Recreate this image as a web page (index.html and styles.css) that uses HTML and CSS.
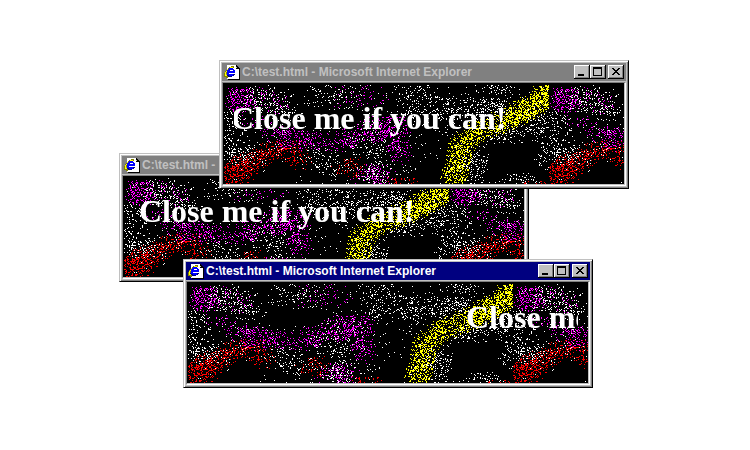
FILE: index.html
```html
<!DOCTYPE html>
<html lang="en">
<head>
<meta charset="utf-8">
<title>C:\test.html</title>
<link rel="stylesheet" href="styles.css">
</head>
<body>
<svg class="defs" aria-hidden="true">
  <symbol id="ie" viewBox="0 0 16 16">
    <path fill="#fff" d="M3 1h9v3h3v11H3z"/>
    <path fill="#000" d="M12 1h1v1h1v1h1v1h1v12H4v-1h11V5h-3z"/>
    <path fill="#c0c0c0" d="M12 3h1v1h-1z"/>
    <path fill="none" stroke="#808000" stroke-width="2" d="M10 3C7 2 1 8 1 11c0 2 2 2 4 1"/>
    <path fill="none" stroke="#ffff00" stroke-width="1" d="M9 3C6 3 1 8 1 10c0 1 1 2 2 1"/>
    <path fill="none" stroke="#000080" stroke-width="2" d="M10 10c-1 2-2 2-4 2-2 0-3-2-2-4"/>
    <path fill="none" stroke="#0000ff" stroke-width="2" d="M4 8h6c0-2-1-3-3-3S4 7 4 9s1 2 3 2h2"/>
  </symbol>
  <symbol id="min" viewBox="0 0 16 14"><path d="M4 9h6v2H4z"/></symbol>
  <symbol id="max" viewBox="0 0 16 14"><path fill-rule="evenodd" d="M3 2h9v9H3zM4 4h7v6H4z"/></symbol>
  <symbol id="close" viewBox="0 0 16 14"><path d="M4 3h2v1h1v1h2V4h1V3h2v1h-1v1h-1v1H9v1h1v1h1v1h1v1h-2V9H9V8H7v1H6v1H4V9h1V8h1V7h1V6H6V5H5V4H4z"/></symbol>
</svg>
<main class="desktop">
  <section class="window window-left">
    <header class="titlebar">
      <svg class="icon"><use href="#ie"/></svg>
      <span class="title">C:\test.html - Microsoft Internet Explorer</span>
      <button class="control" aria-label="Minimize"><svg><use href="#min"/></svg></button>
      <button class="control" aria-label="Maximize"><svg><use href="#max"/></svg></button>
      <button class="control control-close" aria-label="Close"><svg><use href="#close"/></svg></button>
    </header>
    <div class="view"><canvas width="400" height="100"></canvas><h1 class="marquee">Close me if you can!</h1></div>
  </section>
  <section class="window window-top">
    <header class="titlebar">
      <svg class="icon"><use href="#ie"/></svg>
      <span class="title">C:\test.html - Microsoft Internet Explorer</span>
      <button class="control" aria-label="Minimize"><svg><use href="#min"/></svg></button>
      <button class="control" aria-label="Maximize"><svg><use href="#max"/></svg></button>
      <button class="control control-close" aria-label="Close"><svg><use href="#close"/></svg></button>
    </header>
    <div class="view"><canvas width="400" height="100"></canvas><h1 class="marquee">Close me if you can!</h1></div>
  </section>
  <section class="window window-front">
    <header class="titlebar">
      <svg class="icon"><use href="#ie"/></svg>
      <span class="title">C:\test.html - Microsoft Internet Explorer</span>
      <button class="control" aria-label="Minimize"><svg><use href="#min"/></svg></button>
      <button class="control" aria-label="Maximize"><svg><use href="#max"/></svg></button>
      <button class="control control-close" aria-label="Close"><svg><use href="#close"/></svg></button>
    </header>
    <div class="view"><canvas width="400" height="100"></canvas><h1 class="marquee">Close me if you can!</h1></div>
  </section>
</main>
<script src="spray.js"></script>
</body>
</html>
```
FILE: styles.css
```css
body {
  margin: 0;
  background: #fff;
  font-family: "Liberation Sans", Arial, sans-serif;
}

.defs {
  display: none;
}

.desktop {
  position: relative;
  min-height: 100vh;
  overflow: hidden;
}

.window {
  position: absolute;
  box-sizing: border-box;
  width: 410px;
  padding: 1px;
  border: 1px solid;
  border-color: #c0c0c0 #000 #000 #c0c0c0;
  background: #c0c0c0;
  box-shadow: inset 1px 1px #fff, inset -1px -1px #808080;
}

.window-left { left: 119px; top: 153px; }
.window-top { left: 219px; top: 60px; }
.window-front { left: 183px; top: 259px; }

.titlebar {
  display: flex;
  align-items: center;
  height: 18px;
  margin: 1px 1px 0;
  padding: 0 2px;
  box-sizing: border-box;
  background: #808080;
  color: #c0c0c0;
}

.window-front .titlebar {
  background: #000080;
  color: #fff;
}

.icon {
  width: 16px;
  height: 16px;
  shape-rendering: crispEdges;
}

.title {
  flex: 1;
  margin-left: 2px;
  font-size: 12px;
  font-weight: bold;
  line-height: 18px;
  white-space: nowrap;
}

.control {
  width: 16px;
  height: 14px;
  padding: 0;
  border: 0;
  background: #c0c0c0;
  color: #000;
  box-shadow: inset -1px -1px #000, inset 1px 1px #fff, inset -2px -2px #808080;
}

.control svg {
  display: block;
  width: 16px;
  height: 14px;
  shape-rendering: crispEdges;
}

.control-close {
  margin-left: 2px;
}

.view {
  display: grid;
  grid-template-columns: minmax(0, 1fr);
  margin: 1px;
  border: 1px solid;
  border-color: #808080 #fff #fff #808080;
  padding: 1px;
  background: linear-gradient(#000, #000) 0 0 / calc(100% - 1px) calc(100% - 1px) no-repeat #c0c0c0;
}

.view > * {
  grid-area: 1 / 1;
}

.view canvas {
  display: block;
}

.marquee {
  margin: 16px 10px 0;
  color: #fff;
  font-family: "Liberation Serif", "Times New Roman", serif;
  font-size: 32px;
  font-weight: bold;
  line-height: 36px;
  height: 40px;
  white-space: nowrap;
  overflow: hidden;
}

.window-left .marquee { text-indent: 5px; }
.window-top .marquee { text-indent: -3px; }
.window-front .marquee { text-indent: 268px; }
```
FILE: spray.js
```js
// Spray-paint wallpaper: a 325px tile of scattered dots, repeated sideways.
const TILE = 325;
const W = '#ffffff', M = '#ff00ff', R = '#ff0000', Y = '#ffff00';

// Each stroke: colour, x1, y1, x2, y2, spread across, spread along y, dots
const strokes = [
  [W, 22, 12, 55, 18, 16, 14, 150], [W, 45, 24, 72, 28, 12, 10, 50],
  [W, 88, 12, 130, 12, 16, 14, 85], [W, 178, 8, 205, 12, 16, 12, 75],
  [W, 180, 20, 195, 32, 12, 12, 50], [W, 10, 30, 12, 62, 12, 10, 75],
  [W, 3, 68, 30, 72, 14, 11, 120], [W, 30, 68, 60, 66, 14, 10, 35],
  [W, 85, 70, 112, 82, 16, 13, 95], [W, 130, 60, 160, 66, 16, 13, 85],
  [W, 140, 46, 165, 50, 14, 12, 50], [W, 146, 86, 152, 96, 16, 12, 90],
  [W, 212, 26, 238, 24, 15, 13, 110], [W, 245, 26, 282, 24, 14, 13, 160],
  [W, 268, 4, 284, 6, 12, 8, 55], [W, 250, 70, 248, 88, 17, 13, 125],
  [W, 262, 54, 300, 46, 14, 10, 90], [W, 314, 26, 317, 52, 14, 10, 100],
  [W, 288, 98, 308, 98, 12, 8, 60], [W, 318, 66, 322, 82, 10, 12, 45],
  [W, 165, 80, 180, 96, 20, 14, 30],
  [M, 10, 14, 20, 16, 15, 13, 170], [M, 30, 12, 60, 22, 14, 12, 50],
  [M, 22, 32, 50, 50, 12, 8, 45], [M, 58, 54, 78, 56, 18, 13, 150],
  [M, 80, 57, 108, 58, 14, 12, 80], [M, 116, 57, 145, 49, 12, 12, 115],
  [M, 148, 46, 176, 44, 15, 14, 230], [M, 174, 57, 176, 72, 13, 12, 90],
  [M, 140, 94, 158, 90, 15, 13, 120], [M, 108, 14, 158, 12, 12, 13, 60],
  [R, 4, 96, 20, 84, 16, 15, 290], [R, 22, 80, 42, 70, 13, 12, 130],
  [R, 44, 68, 72, 64, 14, 10, 110], [R, 70, 70, 78, 80, 13, 10, 60],
  [R, 118, 84, 136, 84, 14, 12, 60], [R, 164, 98, 188, 98, 12, 6, 35],
  [R, 304, 100, 320, 100, 6, 3, 14],
  [Y, 322, 2, 322, 20, 13, 8, 300], [Y, 316, 18, 292, 31, 14, 13, 370],
  [Y, 294, 30, 266, 43, 14, 12, 270], [Y, 264, 44, 246, 50, 13, 12, 150],
  [Y, 244, 52, 236, 66, 15, 10, 190], [Y, 236, 68, 228, 102, 14, 10, 350]
];

// Areas the sparse background dust stays out of: x, y, width, height
const voids = [[265, 60, 50, 28], [42, 78, 30, 18], [75, 30, 60, 12], [198, 76, 22, 20]];

let seed = 1997;
function rand() {
  seed = (seed * 16807) % 2147483647;
  return seed / 2147483647;
}

const dots = [];
function add(color, x, y) {
  x = Math.floor(x);
  y = Math.floor(y);
  if (x >= 0 && x < TILE && y >= 1 && y < 100) dots.push([color, x, y]);
}

for (let i = 0; i < 620; i++) {
  const x = rand() * TILE, y = rand() * 100;
  if (!voids.some(v => x > v[0] && x < v[0] + v[2] && y > v[1] && y < v[1] + v[3])) add(W, x, y);
}
for (const [color, x1, y1, x2, y2, sx, sy, count] of strokes) {
  for (let i = 0; i < count; i++) {
    const t = rand(), angle = rand() * Math.PI * 2, radius = Math.pow(rand(), 0.6);
    add(color, x1 + (x2 - x1) * t + Math.cos(angle) * radius * sx,
      y1 + (y2 - y1) * t + Math.sin(angle) * radius * sy);
  }
}

for (const canvas of document.querySelectorAll('canvas')) {
  const ctx = canvas.getContext('2d');
  ctx.fillStyle = '#000';
  ctx.fillRect(0, 0, canvas.width, canvas.height);
  for (const [color, x, y] of dots) {
    ctx.fillStyle = color;
    ctx.fillRect(x, y, 1, 1);
    ctx.fillRect(x + TILE, y, 1, 1);
  }
}
```
